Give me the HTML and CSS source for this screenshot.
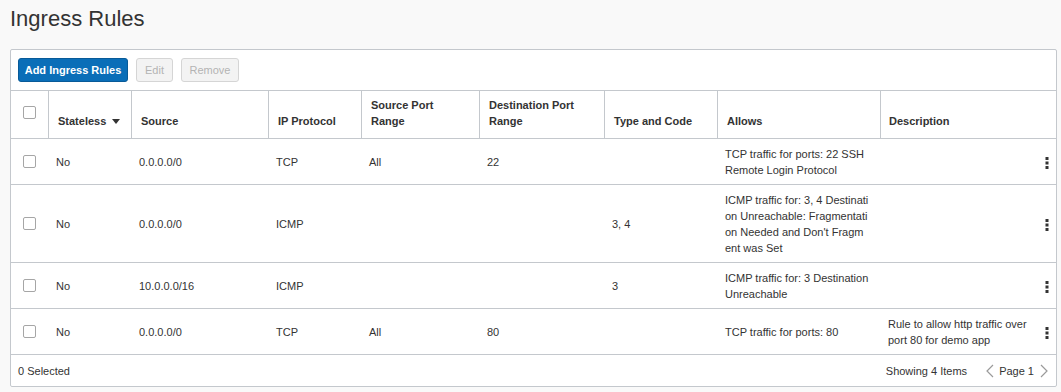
FILE: index.html
```html
<!DOCTYPE html>
<html lang="en">
<head>
<meta charset="utf-8">
<title>Ingress Rules</title>
<link rel="stylesheet" href="styles.css">
</head>
<body>
<div class="page">
  <h1 class="title">Ingress Rules</h1>
  <div class="panel">
    <div class="toolbar">
      <button class="btn btn-primary">Add Ingress Rules</button>
      <button class="btn btn-disabled">Edit</button>
      <button class="btn btn-disabled">Remove</button>
    </div>
    <table class="grid">
      <colgroup>
        <col class="c-check"><col class="c-stateless"><col class="c-source"><col class="c-proto"><col class="c-sport"><col class="c-dport"><col class="c-type"><col class="c-allows"><col class="c-desc"><col class="c-act">
      </colgroup>
      <thead>
        <tr>
          <th class="cell-check"><span class="checkbox"></span></th>
          <th class="nowrap">Stateless <span class="sort"></span></th>
          <th>Source</th>
          <th>IP Protocol</th>
          <th>Source Port<br>Range</th>
          <th>Destination Port<br>Range</th>
          <th>Type and Code</th>
          <th>Allows</th>
          <th class="desc">Description</th>
          <th class="act"></th>
        </tr>
      </thead>
      <tbody>
        <tr>
          <td class="cell-check"><span class="checkbox"></span></td>
          <td>No</td><td>0.0.0.0/0</td><td>TCP</td><td>All</td><td>22</td><td></td>
          <td class="allows">TCP traffic for ports: 22 SSH Remote Login Protocol</td>
          <td class="desc"></td>
          <td class="act"><svg class="kebab" width="4" height="12" viewBox="0 0 4 12"><rect x="0.5" y="0" width="3" height="3"/><rect x="0.5" y="4.5" width="3" height="3"/><rect x="0.5" y="9" width="3" height="3"/></svg></td>
        </tr>
        <tr>
          <td class="cell-check"><span class="checkbox"></span></td>
          <td>No</td><td>0.0.0.0/0</td><td>ICMP</td><td></td><td></td><td>3, 4</td>
          <td class="allows">ICMP traffic for: 3, 4 Destination Unreachable: Fragmentation Needed and Don't Fragment was Set</td>
          <td class="desc"></td>
          <td class="act"><svg class="kebab" width="4" height="12" viewBox="0 0 4 12"><rect x="0.5" y="0" width="3" height="3"/><rect x="0.5" y="4.5" width="3" height="3"/><rect x="0.5" y="9" width="3" height="3"/></svg></td>
        </tr>
        <tr>
          <td class="cell-check"><span class="checkbox"></span></td>
          <td>No</td><td>10.0.0.0/16</td><td>ICMP</td><td></td><td></td><td>3</td>
          <td class="allows">ICMP traffic for: 3 Destination Unreachable</td>
          <td class="desc"></td>
          <td class="act"><svg class="kebab" width="4" height="12" viewBox="0 0 4 12"><rect x="0.5" y="0" width="3" height="3"/><rect x="0.5" y="4.5" width="3" height="3"/><rect x="0.5" y="9" width="3" height="3"/></svg></td>
        </tr>
        <tr>
          <td class="cell-check"><span class="checkbox"></span></td>
          <td>No</td><td>0.0.0.0/0</td><td>TCP</td><td>All</td><td>80</td><td></td>
          <td class="allows">TCP traffic for ports: 80</td>
          <td class="desc">Rule to allow http traffic over port 80 for demo app</td>
          <td class="act"><svg class="kebab" width="4" height="12" viewBox="0 0 4 12"><rect x="0.5" y="0" width="3" height="3"/><rect x="0.5" y="4.5" width="3" height="3"/><rect x="0.5" y="9" width="3" height="3"/></svg></td>
        </tr>
      </tbody>
    </table>
    <div class="footer">
      <span class="selected">0 Selected</span>
      <div class="pager">
        <span class="count">Showing 4 Items</span>
        <svg class="chev" width="9" height="14" viewBox="0 0 9 14"><path d="M8 1 L2 7 L8 13" fill="none" stroke="#9a9a9a" stroke-width="1.2"/></svg>
        <span class="page-num">Page 1</span>
        <svg class="chev" width="9" height="14" viewBox="0 0 9 14"><path d="M1 1 L7 7 L1 13" fill="none" stroke="#9a9a9a" stroke-width="1.2"/></svg>
      </div>
    </div>
  </div>
</div>
</body>
</html>
```
FILE: styles.css
```css
html, body {
  margin: 0;
  padding: 0;
  background: #f9f9f9;
}
body {
  font-family: "Liberation Sans", Arial, sans-serif;
  color: #333333;
  font-size: 11px;
}
.page {
  padding: 6px 0 0 10px;
}
.title {
  margin: 0 0 17px 0;
  font-size: 22px;
  line-height: 26px;
  font-weight: normal;
  color: #333333;
}
.panel {
  width: 1045px;
  border: 1px solid #c4c8cd;
  border-radius: 2px;
  background: #ffffff;
}
.toolbar {
  display: flex;
  gap: 8px;
  padding: 8px 7px;
  border-bottom: 1px solid #c4c8cd;
}
.btn {
  height: 24px;
  padding: 0;
  font-family: "Liberation Sans", Arial, sans-serif;
  font-size: 11px;
  border-radius: 3px;
  box-sizing: border-box;
}
.btn-primary {
  background: #0a6eb8;
  border: 1px solid #085a98;
  color: #ffffff;
  font-weight: bold;
  width: 110px;
}
.btn-disabled {
  background: #f3f3f3;
  border: 1px solid #d5d5d5;
  color: #b3b3b3;
}
.btn-disabled:nth-child(2) { width: 37px; }
.btn-disabled:nth-child(3) { width: 58px; }
.grid {
  width: 1045px;
  table-layout: fixed;
  border-collapse: separate;
  border-spacing: 0;
}
.c-check { width: 37px; }
.c-stateless { width: 83px; }
.c-source { width: 137px; }
.c-proto { width: 93px; }
.c-sport { width: 118px; }
.c-dport { width: 125px; }
.c-type { width: 113px; }
.c-allows { width: 163px; }
.c-desc { width: 155px; }
.c-act { width: 21px; }
th {
  text-align: left;
  font-weight: bold;
  color: #333333;
  line-height: 16px;
  vertical-align: bottom;
  padding: 6px 9px 9px 9px;
  border-bottom: 1px solid #c4c8cd;
  border-left: 1px solid #c4c8cd;
}
th:first-child { border-left: none; }
th.act { border-left: none; }
th.nowrap { white-space: nowrap; }
td {
  line-height: 16px;
  padding: 7px 9px 6px 8px;
  border-bottom: 1px solid #c4c8cd;
  vertical-align: middle;
  color: #333333;
}
th.cell-check, td.cell-check {
  padding: 0 0 0 12px;
  vertical-align: middle;
}
th.cell-check { vertical-align: top; padding-top: 15px; }
td.allows { word-break: break-all; padding-left: 8px; padding-right: 10.9px; }
th.desc { padding-left: 8px; padding-right: 2px; }
td.desc { padding-left: 8px; padding-right: 2px; }
td.act { padding: 0 7px 0 0; text-align: right; }
.checkbox {
  display: block;
  width: 11px;
  height: 11px;
  border: 1px solid #a6a6a6;
  border-radius: 2px;
  background: #ffffff;
}
.sort {
  display: inline-block;
  width: 0;
  height: 0;
  border-left: 4px solid transparent;
  border-right: 4px solid transparent;
  border-top: 5px solid #333333;
  margin-left: 3px;
  vertical-align: 1px;
}
.kebab { display: inline-block; vertical-align: middle; fill: #333333; }
.footer {
  display: flex;
  justify-content: space-between;
  align-items: center;
  height: 31px;
  padding: 0 7px;
}
.pager {
  display: flex;
  align-items: center;
}
.count { margin-right: 18px; }
.page-num { margin: 0 6px 0 5px; }
.chev { display: block; }
```
